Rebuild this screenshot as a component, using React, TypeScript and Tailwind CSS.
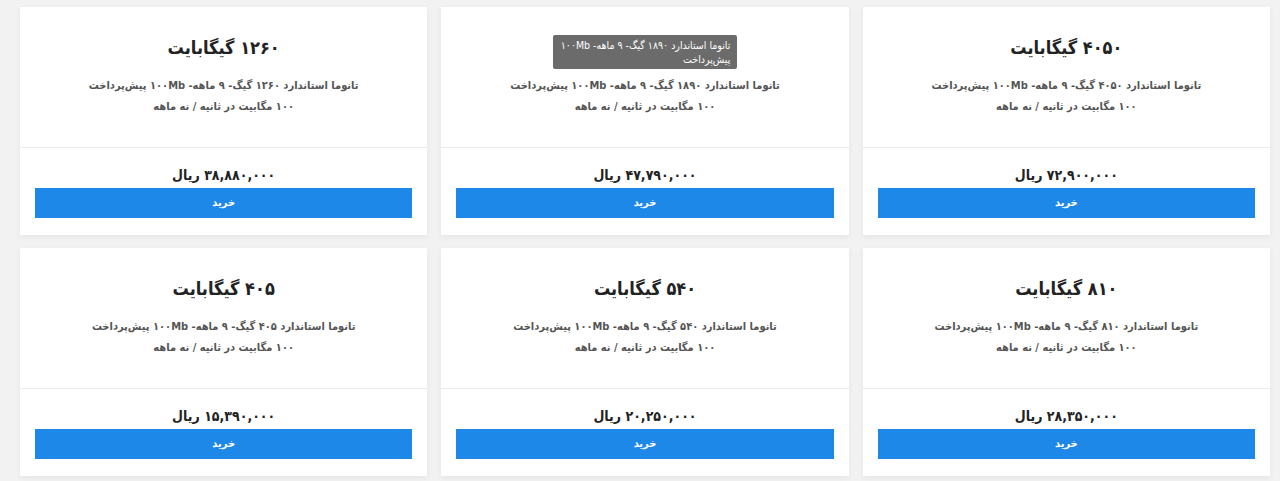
import React from 'react';

type Plan = {
  size: string;
  price: string;
  tooltip?: boolean;
};

const plans: Plan[] = [
  { size: '۴۰۵۰', price: '۷۲,۹۰۰,۰۰۰' },
  { size: '۱۸۹۰', price: '۴۷,۷۹۰,۰۰۰', tooltip: true },
  { size: '۱۲۶۰', price: '۳۸,۸۸۰,۰۰۰' },
  { size: '۸۱۰', price: '۲۸,۳۵۰,۰۰۰' },
  { size: '۵۴۰', price: '۲۰,۲۵۰,۰۰۰' },
  { size: '۴۰۵', price: '۱۵,۳۹۰,۰۰۰' },
];

const font = { fontFamily: '"DejaVu Sans Condensed", "DejaVu Sans", sans-serif' };

const PlanCard: React.FC<{ plan: Plan }> = ({ plan }) => {
  const name = `تانوما استاندارد ${plan.size} گیگ- ۹ ماهه- ۱۰۰Mb پیش‌پرداخت`;
  return (
    <div className="relative bg-white shadow-[0_2px_6px_rgba(0,0,0,0.06)] h-[228px] flex flex-col">
      {/* Head */}
      <div className="h-[141px] border-b border-[#ececec] pt-6 text-center">
        <h3 className="text-[18px] font-bold leading-[34px] text-[#222]">
          {plan.size} گیگابایت
        </h3>
        <p className="mt-[10px] text-[11px] font-bold leading-[21px] text-[#555]">{name}</p>
        <p className="text-[11px] font-bold leading-[21px] text-[#555]">۱۰۰ مگابیت در ثانیه / نه ماهه</p>
      </div>

      {/* Footer */}
      <div className="px-[15px] pt-4 text-center">
        <div className="text-[14px] font-bold leading-[22px] text-[#222]">{plan.price} ریال</div>
        <button className="mt-[2px] w-full h-[30px] bg-[#1e88e8] text-white text-[11px] font-bold">
          خرید
        </button>
      </div>

      {plan.tooltip && (
        <div className="absolute left-[112px] top-[28px] w-[184px] rounded-[2px] bg-[#6b6b6b] px-[7px] py-[3px] text-right text-[10.5px] leading-[14px] text-white">
          {name}
        </div>
      )}
    </div>
  );
};

const App: React.FC = () => {
  return (
    <div dir="rtl" style={font} className="min-h-[481px] bg-[#f2f2f2] pt-[7px] pr-[10px] pl-[20px]">
      <div className="grid grid-cols-3 gap-x-[14px] gap-y-[13px]">
        {plans.map((p, i) => (
          <PlanCard key={i} plan={p} />
        ))}
      </div>
    </div>
  );
};

export default App;
